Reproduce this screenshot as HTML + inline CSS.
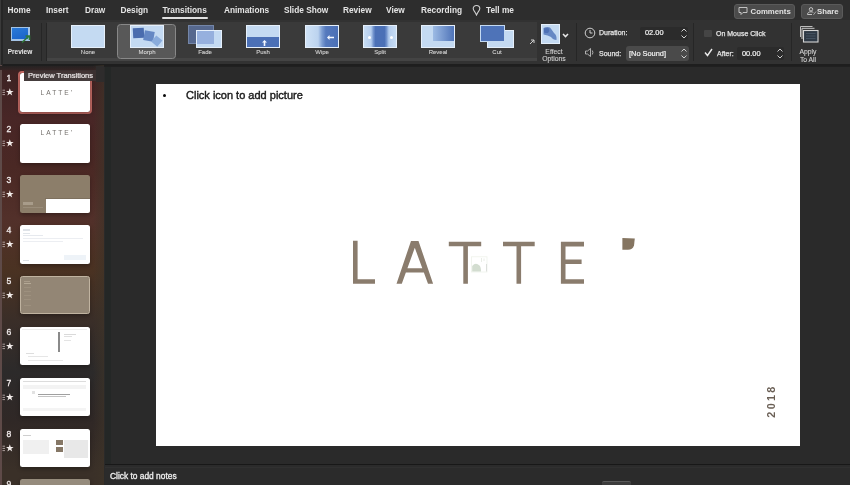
<!DOCTYPE html>
<html><head><meta charset="utf-8">
<style>
*{margin:0;padding:0;box-sizing:border-box}
html,body{width:850px;height:485px;overflow:hidden;background:#282828;font-family:"Liberation Sans",sans-serif}
.a{position:absolute}
#top{left:0;top:0;width:850px;height:20px;background:#2d2d2d}
#ribbon{left:0;top:20px;width:850px;height:46px;background:#323232;border-bottom:2px solid #1e1e1e}
.tab{position:absolute;top:5.2px;font-size:8.3px;color:#e4e4e4;font-weight:bold;white-space:nowrap;line-height:11px}
.lbl{position:absolute;font-size:6px;color:#d4d4d4;font-weight:normal;-webkit-text-stroke:0.1px #d4d4d4;white-space:nowrap;line-height:7px;text-align:center}
.th{position:absolute;top:25px;width:34px;height:23px;background:#c4daf2;border:1px solid #e6f0fb;overflow:hidden}
.blu{position:absolute;background:#4b70b6}
.sep{position:absolute;top:23px;width:1px;height:38px;background:#262626}
.rt{position:absolute;font-size:7px;color:#e4e4e4;font-weight:normal;-webkit-text-stroke:0.25px #e4e4e4;white-space:nowrap;line-height:8px}
.num{position:absolute;left:6px;width:6px;font-size:8.6px;font-weight:normal;-webkit-text-stroke:0.3px #f0eaea;color:#f0eaea;line-height:8px;text-align:center}
.sl{position:absolute;left:20px;width:69.6px;height:38.6px;background:#fff;border-radius:2.5px;overflow:hidden;box-shadow:0 2px 4px rgba(0,0,0,0.3)}
.mini{position:absolute;left:1.5px;top:16px;width:100%;text-align:center;font-size:6.6px;letter-spacing:2.05px;color:#74706c;line-height:7px;text-indent:2px}
#side{left:0;top:65.5px;width:104px;height:420px;background:linear-gradient(180deg,#2a2424 0px,#3c2222 5px,#482626 52px,#4a2824 102px,#52302a 152px,#4a3222 204px,#3a2e28 254px,#2c2a2a 306px,#302826 356px,#3a3028 404px)}
#main{left:104px;top:66px;width:746px;height:420px;background:#2a2a2a;border-top:1.5px solid #202020}
#slide{left:155.5px;top:83.7px;width:644.6px;height:362.8px;background:#fff}
#notes{left:104.5px;top:463.6px;width:746px;height:22px;background:#2b2b2b;border-top:1.2px solid #181818}
</style></head><body><div id="root" style="position:absolute;left:0;top:0;width:850px;height:485px;will-change:transform">
<div id="top" class="a"></div>
<div class="tab" style="left:7.5px">Home</div>
<div class="tab" style="left:46px">Insert</div>
<div class="tab" style="left:85px">Draw</div>
<div class="tab" style="left:120.5px">Design</div>
<div class="tab" style="left:162.5px">Transitions</div>
<div class="a" style="left:162px;top:17px;width:46px;height:2px;background:#e0e0e0;border-radius:1px"></div>
<div class="tab" style="left:224px">Animations</div>
<div class="tab" style="left:284px">Slide Show</div>
<div class="tab" style="left:343px">Review</div>
<div class="tab" style="left:386px">View</div>
<div class="tab" style="left:421px">Recording</div>
<svg class="a" style="left:471.5px;top:3.5px" width="9" height="12" viewBox="0 0 9 12"><path d="M4.5 1.5 C2.6 1.5 1.2 2.9 1.2 4.6 C1.2 6.4 2.8 7.6 3.6 9.2 L4.5 11 L5.4 9.2 C6.2 7.6 7.8 6.4 7.8 4.6 C7.8 2.9 6.4 1.5 4.5 1.5 Z" fill="none" stroke="#d0d0d0" stroke-width="1.1"/></svg>
<div class="tab" style="left:486px">Tell me</div>
<!-- top right buttons -->
<div class="a" style="left:734px;top:3.5px;width:61px;height:15px;background:#4b4b4b;border-radius:3px;border:1px solid #5a5a5a"></div>
<svg class="a" style="left:738px;top:6px" width="10" height="10" viewBox="0 0 10 10"><path d="M1 1.5 H9 V6.5 H5 L3 8.5 V6.5 H1 Z" fill="none" stroke="#d0d0d0" stroke-width="0.9"/></svg>
<div class="a" style="left:750.5px;top:6.6px;font-size:7.8px;font-weight:bold;color:#e2e2e2;line-height:9px">Comments</div>
<div class="a" style="left:801px;top:3.5px;width:42px;height:15px;background:#4b4b4b;border-radius:3px;border:1px solid #5a5a5a"></div>
<svg class="a" style="left:806px;top:6px" width="11" height="10" viewBox="0 0 11 10"><circle cx="5" cy="3.3" r="1.7" fill="none" stroke="#d0d0d0" stroke-width="0.9"/><path d="M1.5 8.5 C1.5 6.5 3 5.8 5 5.8 C6 5.8 6.8 6 7.3 6.4 M1.5 8.5 H6" fill="none" stroke="#d0d0d0" stroke-width="0.9"/><path d="M7.5 8.8 L10 5.5" stroke="#bbb" stroke-width="0.8"/></svg>
<div class="a" style="left:817px;top:6.6px;font-size:7.8px;font-weight:bold;color:#e2e2e2;line-height:9px">Share</div>

<div id="ribbon" class="a"></div>
<div class="a" style="left:0;top:0;width:1px;height:66px;background:#3a3a3a"></div><div class="a" style="left:1px;top:0;width:2px;height:66px;background:#262626"></div>
<!-- Preview -->
<div class="a" style="left:10.5px;top:26.5px;width:19px;height:14.3px;background:#a4c4e6;"></div>
<div class="a" style="left:12px;top:28px;width:16px;height:11.3px;background:linear-gradient(160deg,#2a7ad8,#1a62c8)"></div>
<svg class="a" style="left:21px;top:34px" width="11" height="10" viewBox="0 0 11 10"><path d="M1 8.5 L8 2 M4.5 2 H8.5 V6" fill="none" stroke="#2f7a3a" stroke-width="1.6"/></svg>
<div class="lbl" style="left:6px;top:47.8px;width:28px;font-size:6.5px;font-weight:bold;color:#ececec;-webkit-text-stroke:0">Preview</div>
<div class="sep" style="left:41px"></div>
<div class="sep" style="left:46px"></div>
<!-- gallery -->
<div class="a" style="left:47px;top:22px;width:490px;height:35.8px;background:#3a3a3a"></div>
<div class="a" style="left:47px;top:57.8px;width:490px;height:2.8px;background:#444"></div>
<div class="a" style="left:117px;top:23.8px;width:59px;height:35px;background:#585858;border:1.6px solid #888;border-radius:3.5px"></div>
<div class="th" style="left:71px"></div>
<div class="lbl" style="left:71px;top:49px;width:34px">None</div>
<div class="th" style="left:130px"><div class="blu" style="left:1.5px;top:1.5px;width:11px;height:10px;background:#4a6cae;transform:rotate(-3deg)"></div><div class="blu" style="left:13px;top:4.5px;width:10px;height:9.5px;background:#6588c4;transform:rotate(10deg)"></div><div class="blu" style="left:22px;top:10.5px;width:7.5px;height:7.5px;background:#8aacdc;transform:rotate(40deg)"></div></div>
<div class="lbl" style="left:130px;top:49px;width:34px">Morph</div>
<div class="th" style="left:188px;background:#3a3a3a;border:none"><div class="blu" style="left:0;top:-0.5px;width:26px;height:19.5px;background:#56688e;border:1px solid #7486a8"></div><div class="a" style="left:7.5px;top:5.2px;width:26px;height:17.8px;background:#c4daf2;border:1px solid #e6f0fb"></div><div class="blu" style="left:8.5px;top:6.2px;width:17px;height:12.8px;background:#96b0de"></div></div>
<div class="lbl" style="left:188px;top:49px;width:34px">Fade</div>
<div class="th" style="left:246px"><div class="blu" style="left:0;top:11px;width:34px;height:12px"></div><svg class="a" style="left:14.5px;top:13.5px" width="5" height="6" viewBox="0 0 5 6"><path d="M2.5 0 L5 2.5 H3.3 V6 H1.7 V2.5 H0 Z" fill="#f4f8ff"/></svg></div>
<div class="lbl" style="left:246px;top:49px;width:34px">Push</div>
<div class="th" style="left:305px;background:linear-gradient(90deg,#cfe2f6 0%,#bcd3ef 38%,#7c9dd2 50%,#5579bd 62%,#4b70b6 100%)"><svg class="a" style="left:21px;top:8.5px" width="7" height="5" viewBox="0 0 7 5"><path d="M0 2.5 L2.5 0 V1.7 H7 V3.3 H2.5 V5 Z" fill="#f4f8ff"/></svg></div>
<div class="lbl" style="left:305px;top:49px;width:34px">Wipe</div>
<div class="th" style="left:363px;background:linear-gradient(90deg,#c8ddf4 0%,#b4cdee 22%,#6d8fca 30%,#4b70b6 36%,#4b70b6 64%,#6d8fca 70%,#b4cdee 78%,#c8ddf4 100%)"><div class="a" style="left:4px;top:10px;width:3px;height:3px;background:#fff;border-radius:50%"></div><div class="a" style="left:26px;top:10px;width:3px;height:3px;background:#fff;border-radius:50%"></div></div>
<div class="lbl" style="left:363px;top:49px;width:34px">Split</div>
<div class="th" style="left:421px"><div class="blu" style="left:11px;top:0;width:22px;height:15px;background:linear-gradient(90deg,#9dbbe4,#4b70b6)"></div></div>
<div class="lbl" style="left:421px;top:49px;width:34px">Reveal</div>
<div class="th" style="left:480px;background:#3a3a3a;border:none"><div class="a" style="left:7px;top:5px;width:27px;height:18px;background:#c4daf2;border:1px solid #e6f0fb"></div><div class="blu" style="left:0;top:0;width:25px;height:17px;border:1px solid #c4daf2;background:#4e73b8"></div></div>
<div class="lbl" style="left:480px;top:49px;width:34px">Cut</div>
<svg class="a" style="left:529px;top:39px" width="6" height="6" viewBox="0 0 6 6"><path d="M1 5 L5 1 M2 1 H5 V4" fill="none" stroke="#cfcfcf" stroke-width="1"/></svg>
<!-- effect options -->
<div class="a" style="left:541px;top:24px;width:19px;height:20px;background:#c4daf2;border:1px solid #e6f0fb"></div>
<svg class="a" style="left:542px;top:25px" width="17" height="18" viewBox="0 0 17 18"><defs><filter id="bl"><feGaussianBlur stdDeviation="0.7"/></filter></defs><g filter="url(#bl)"><path d="M1.5 3 Q5 1.5 8 2.5 Q10 5 12 8 Q15 10 14.5 15 Q11 15 9 12 Q6 10 1.5 9.5 Z" fill="#6688c4"/><path d="M2 3.5 Q5 2.5 7 3.5 Q8 6 6 8 Q3 8 2 7.5 Z" fill="#4d6fb4"/></g></svg>
<svg class="a" style="left:562px;top:32.5px" width="7" height="5" viewBox="0 0 7 5"><path d="M1 1 L3.5 3.6 L6 1" fill="none" stroke="#e8e8e8" stroke-width="1.5"/></svg>
<div class="lbl" style="left:538px;top:47.5px;width:32px;font-size:6.8px;line-height:7.2px">Effect<br>Options</div>
<div class="sep" style="left:576px"></div>
<!-- duration -->
<svg class="a" style="left:584px;top:27px" width="12" height="12" viewBox="0 0 12 12"><circle cx="6" cy="6" r="4.8" fill="none" stroke="#cfcfcf" stroke-width="1"/><path d="M6 3 V6 H8.5" fill="none" stroke="#cfcfcf" stroke-width="1"/></svg>
<div class="rt" style="left:599px;top:29px">Duration:</div>
<div class="a" style="left:640px;top:27px;width:48px;height:13px;background:#2b2b2b;border-radius:2px"></div>
<div class="rt" style="left:645px;top:29px;font-weight:normal;font-size:7.4px;color:#f2f2f2;-webkit-text-stroke:0.2px #f2f2f2">02.00</div>
<svg class="a" style="left:680px;top:27px" width="8" height="13" viewBox="0 0 8 13"><path d="M1.5 4.5 L4 2 L6.5 4.5 M1.5 8.5 L4 11 L6.5 8.5" fill="none" stroke="#cfcfcf" stroke-width="1"/></svg>
<svg class="a" style="left:584px;top:47px" width="12" height="11" viewBox="0 0 12 11"><path d="M1.5 4 H3.5 L6.5 1.5 V9.5 L3.5 7 H1.5 Z" fill="none" stroke="#bdbdbd" stroke-width="0.9"/><path d="M8.3 3.5 Q9.5 5.5 8.3 7.5" fill="none" stroke="#bdbdbd" stroke-width="0.9"/></svg>
<div class="rt" style="left:599px;top:49.7px">Sound:</div>
<div class="a" style="left:626px;top:46px;width:63px;height:15px;background:#4a4a4a;border-radius:3px"></div>
<div class="rt" style="left:629px;top:49.7px;font-weight:normal;font-size:7.4px;color:#f2f2f2;-webkit-text-stroke:0.2px #f2f2f2">[No Sound]</div>
<svg class="a" style="left:680px;top:47px" width="8" height="13" viewBox="0 0 8 13"><path d="M1.5 4.5 L4 2 L6.5 4.5 M1.5 8.5 L4 11 L6.5 8.5" fill="none" stroke="#cfcfcf" stroke-width="1"/></svg>
<div class="sep" style="left:693px"></div>
<!-- on mouse click -->
<div class="a" style="left:704px;top:30px;width:8px;height:7px;background:#454545;border-radius:1px"></div>
<div class="rt" style="left:716px;top:30px">On Mouse Click</div>
<svg class="a" style="left:704px;top:48px" width="9" height="9" viewBox="0 0 9 9"><path d="M1 4.5 L3.5 7.5 L8 1" fill="none" stroke="#eaeaea" stroke-width="1.4"/></svg>
<div class="rt" style="left:717px;top:49.7px">After:</div>
<div class="a" style="left:737px;top:47px;width:47px;height:13px;background:#2b2b2b;border-radius:2px"></div>
<div class="rt" style="left:742px;top:49.7px;font-weight:normal;font-size:7.4px;color:#f2f2f2;-webkit-text-stroke:0.2px #f2f2f2">00.00</div>
<svg class="a" style="left:776px;top:47px" width="8" height="13" viewBox="0 0 8 13"><path d="M1.5 4.5 L4 2 L6.5 4.5 M1.5 8.5 L4 11 L6.5 8.5" fill="none" stroke="#cfcfcf" stroke-width="1"/></svg>
<div class="sep" style="left:791px"></div>
<!-- apply to all -->
<svg class="a" style="left:798px;top:24px" width="24" height="20" viewBox="0 0 24 20"><path d="M2.5 13 V2.5 H14.5" fill="none" stroke="#bdbdbd" stroke-width="1"/><path d="M4 15 V4.3 H16.5" fill="none" stroke="#c8c8c8" stroke-width="1"/><rect x="5.5" y="6.5" width="14.5" height="11.5" fill="#2f3a46" stroke="#d6d6d6" stroke-width="1.1"/><path d="M8 9.5 H17.5 M8 12 H17.5 M8 14.5 H17.5" stroke="#4a5868" stroke-width="0.8"/></svg>
<div class="lbl" style="left:794px;top:47.5px;width:28px;font-size:6.8px;line-height:8px">Apply<br>To All</div>

<div id="side" class="a"></div>
<div class="a" style="left:0;top:65px;width:1.5px;height:420px;background:#5e4a48"></div>
<div class="a" style="left:0;top:65.5px;width:104px;height:4px;background:linear-gradient(180deg,#262222,#342424)"></div>
<div class="a" style="left:93px;top:65px;width:11px;height:420px;background:linear-gradient(90deg,rgba(62,52,40,0) 0%,rgba(62,52,40,0.65) 100%)"></div>
<div class="a" style="left:104px;top:65px;width:1px;height:420px;background:#1e1e1e"></div>
<div class="num" style="top:74.2px">1</div>
<svg class="a" style="left:2px;top:88px" width="12" height="8" viewBox="0 0 12 8"><path d="M7.8 0.3 L8.8 3 L11.6 3 L9.3 4.7 L10.2 7.5 L7.8 5.8 L5.4 7.5 L6.3 4.7 L4 3 L6.8 3 Z" fill="#f2ecea"/><path d="M0.5 2.2 H3 M0.5 4.4 H3 M0.5 6.6 H3" stroke="#b8aaa8" stroke-width="0.9"/></svg>
<div class="num" style="top:125.2px">2</div>
<svg class="a" style="left:2px;top:139px" width="12" height="8" viewBox="0 0 12 8"><path d="M7.8 0.3 L8.8 3 L11.6 3 L9.3 4.7 L10.2 7.5 L7.8 5.8 L5.4 7.5 L6.3 4.7 L4 3 L6.8 3 Z" fill="#f2ecea"/><path d="M0.5 2.2 H3 M0.5 4.4 H3 M0.5 6.6 H3" stroke="#b8aaa8" stroke-width="0.9"/></svg>
<div class="num" style="top:175.8px">3</div>
<svg class="a" style="left:2px;top:189.6px" width="12" height="8" viewBox="0 0 12 8"><path d="M7.8 0.3 L8.8 3 L11.6 3 L9.3 4.7 L10.2 7.5 L7.8 5.8 L5.4 7.5 L6.3 4.7 L4 3 L6.8 3 Z" fill="#f2ecea"/><path d="M0.5 2.2 H3 M0.5 4.4 H3 M0.5 6.6 H3" stroke="#b8aaa8" stroke-width="0.9"/></svg>
<div class="num" style="top:226.4px">4</div>
<svg class="a" style="left:2px;top:240.2px" width="12" height="8" viewBox="0 0 12 8"><path d="M7.8 0.3 L8.8 3 L11.6 3 L9.3 4.7 L10.2 7.5 L7.8 5.8 L5.4 7.5 L6.3 4.7 L4 3 L6.8 3 Z" fill="#f2ecea"/><path d="M0.5 2.2 H3 M0.5 4.4 H3 M0.5 6.6 H3" stroke="#b8aaa8" stroke-width="0.9"/></svg>
<div class="num" style="top:277px">5</div>
<svg class="a" style="left:2px;top:290.8px" width="12" height="8" viewBox="0 0 12 8"><path d="M7.8 0.3 L8.8 3 L11.6 3 L9.3 4.7 L10.2 7.5 L7.8 5.8 L5.4 7.5 L6.3 4.7 L4 3 L6.8 3 Z" fill="#f2ecea"/><path d="M0.5 2.2 H3 M0.5 4.4 H3 M0.5 6.6 H3" stroke="#b8aaa8" stroke-width="0.9"/></svg>
<div class="num" style="top:328px">6</div>
<svg class="a" style="left:2px;top:341.8px" width="12" height="8" viewBox="0 0 12 8"><path d="M7.8 0.3 L8.8 3 L11.6 3 L9.3 4.7 L10.2 7.5 L7.8 5.8 L5.4 7.5 L6.3 4.7 L4 3 L6.8 3 Z" fill="#f2ecea"/><path d="M0.5 2.2 H3 M0.5 4.4 H3 M0.5 6.6 H3" stroke="#b8aaa8" stroke-width="0.9"/></svg>
<div class="num" style="top:379px">7</div>
<svg class="a" style="left:2px;top:392.8px" width="12" height="8" viewBox="0 0 12 8"><path d="M7.8 0.3 L8.8 3 L11.6 3 L9.3 4.7 L10.2 7.5 L7.8 5.8 L5.4 7.5 L6.3 4.7 L4 3 L6.8 3 Z" fill="#f2ecea"/><path d="M0.5 2.2 H3 M0.5 4.4 H3 M0.5 6.6 H3" stroke="#b8aaa8" stroke-width="0.9"/></svg>
<div class="num" style="top:429.9px">8</div>
<svg class="a" style="left:2px;top:443.7px" width="12" height="8" viewBox="0 0 12 8"><path d="M7.8 0.3 L8.8 3 L11.6 3 L9.3 4.7 L10.2 7.5 L7.8 5.8 L5.4 7.5 L6.3 4.7 L4 3 L6.8 3 Z" fill="#f2ecea"/><path d="M0.5 2.2 H3 M0.5 4.4 H3 M0.5 6.6 H3" stroke="#b8aaa8" stroke-width="0.9"/></svg>
<div class="num" style="top:480.4px">9</div>
<div class="a" style="left:18px;top:71px;width:74px;height:43px;border:2px solid #c06862;border-radius:4px"></div>
<div class="sl" style="top:73px"><div class="mini">LATTE'</div></div>
<div class="a" style="left:24px;top:69.5px;width:72px;height:11.5px;background:rgba(58,50,50,0.95)"></div><div class="a" style="left:96px;top:65.5px;width:8px;height:16px;background:#2e2c2c"></div>
<div class="a" style="left:28px;top:70.8px;font-size:7.5px;font-weight:normal;-webkit-text-stroke:0.2px #ece8e8;color:#ece8e8;line-height:9px;white-space:nowrap">Preview Transitions</div>
<div class="sl" style="top:124px"><div class="mini" style="top:5px">LATTE'</div></div>
<div class="sl" style="top:174.6px;background:#8c7e6a"><div class="a" style="left:25px;top:23px;width:45px;height:1.5px;background:#7d705e"></div><div class="a" style="left:26px;top:24.3px;width:44px;height:15px;background:#fff"></div><div class="a" style="left:2.5px;top:27.5px;width:10px;height:3px;background:#a89c8a"></div><div class="a" style="left:2.5px;top:32px;width:20px;height:1px;background:#9a8d7a"></div></div>
<div class="sl" style="top:225.2px"><div class="a" style="left:3px;top:4px;width:7px;height:1.5px;background:#dfe3e8"></div><div class="a" style="left:3px;top:7.5px;width:7px;height:1px;background:#e2e6ea"></div><div class="a" style="left:3px;top:10px;width:20px;height:1px;background:#e6e9ee"></div><div class="a" style="left:3px;top:13px;width:60px;height:1px;background:#eceef2"></div><div class="a" style="left:3px;top:16px;width:40px;height:1px;background:#eceef2"></div><div class="a" style="left:3px;top:35px;width:6px;height:1px;background:#dde0e4"></div><div class="a" style="left:44px;top:30px;width:22px;height:5px;background:#eef3f8"></div></div>
<div class="sl" style="top:275.8px;background:#938675;border:1px solid #c0b3a0"><div class="a" style="left:3px;top:4px;width:6px;height:1px;background:#a99c8a"></div><div class="a" style="left:3px;top:6.5px;width:7px;height:1.2px;background:#b5a996"></div><div class="a" style="left:3px;top:10px;width:7px;height:1px;background:#9d907e"></div><div class="a" style="left:3px;top:14px;width:7px;height:1px;background:#9d907e"></div><div class="a" style="left:3px;top:18px;width:7px;height:1px;background:#9d907e"></div><div class="a" style="left:3px;top:22px;width:7px;height:1px;background:#9d907e"></div><div class="a" style="left:3px;top:28px;width:7px;height:1px;background:#9d907e"></div></div>
<div class="sl" style="top:326.8px"><div class="a" style="left:38px;top:5.5px;width:1.6px;height:20px;background:#8a8a8a"></div><div class="a" style="left:2px;top:2.5px;width:65px;height:0.8px;background:#ececec"></div><div class="a" style="left:44px;top:7px;width:12px;height:1px;background:#dadada"></div><div class="a" style="left:44px;top:9.5px;width:8px;height:1px;background:#e0e0e0"></div><div class="a" style="left:44px;top:13px;width:7px;height:1px;background:#e4e4e4"></div><div class="a" style="left:6px;top:26px;width:8px;height:1px;background:#dedede"></div><div class="a" style="left:8px;top:29px;width:20px;height:1px;background:#e6e6e6"></div><div class="a" style="left:8px;top:33px;width:35px;height:1px;background:#e8e8e8"></div></div>
<div class="sl" style="top:377.8px"><div class="a" style="left:3px;top:3px;width:63px;height:0.8px;background:#dcdcdc"></div><div class="a" style="left:3px;top:7px;width:63px;height:4px;background:#f3f3f3"></div><div class="a" style="left:12px;top:13px;width:3px;height:3px;background:#e2e2e2"></div><div class="a" style="left:18px;top:16px;width:32px;height:0.8px;background:#a0a0a0"></div><div class="a" style="left:18px;top:18.5px;width:28px;height:0.8px;background:#c4c4c4"></div><div class="a" style="left:3px;top:30px;width:63px;height:3px;background:#f4f4f4"></div></div>
<div class="sl" style="top:428.7px"><div class="a" style="left:3px;top:6px;width:8px;height:1px;background:#cfcfcf"></div><div class="a" style="left:3px;top:11px;width:26px;height:14px;background:#f0f0f0"></div><div class="a" style="left:36px;top:11px;width:7px;height:5px;background:#857766"></div><div class="a" style="left:36px;top:18.5px;width:7px;height:5px;background:#857766"></div><div class="a" style="left:44px;top:11px;width:24px;height:18px;background:#e8e8e8"></div></div>
<div class="sl" style="top:479.2px;background:#958b7c"></div>

<div id="main" class="a"></div>
<div class="a" style="left:104.5px;top:67px;width:6px;height:397px;background:#242726"></div>
<div id="slide" class="a"></div>
<div class="a" style="left:163px;top:93.6px;width:3px;height:3px;background:#0a0a0a;border-radius:50%"></div>
<div class="a" style="left:186px;top:89px;font-size:11px;color:#1a1a1a;-webkit-text-stroke:0.4px #1a1a1a;line-height:13px;white-space:nowrap">Click icon to add picture</div>
<svg class="a" style="left:0;top:0" width="850" height="485" viewBox="0 0 850 485">
<g stroke="#8a7c6d" stroke-width="4.6" fill="none" stroke-linecap="butt">
<path d="M355.3 240.7 V281.5 H375"/>
<path d="M448.8 244 H481.2 M465.6 244 V283.8"/>
<path d="M503 244 H534.7 M518.8 244 V283.8"/>
<path d="M584 244.1 H563.2 V281.5 H584 M563.2 261.8 H581.6"/>
</g>
<path d="M396.5 283.8 L411 241 L418.5 241 L433.1 283.8 L428 283.8 L414.8 247.8 L401.8 283.8 Z M406.3 268.2 H423.4 L424.8 272.5 H404.9 Z" fill="#8a7c6d"/>
<path d="M622.4 238 L634.8 238.4 L634 245.5 Q632.5 249.8 628 249.8 L622.4 249.8 Z" fill="#857561"/>
<rect x="471.5" y="256.8" width="15.5" height="15.2" fill="none" stroke="#eef2ea" stroke-width="0.8"/><path d="M472.2 271.5 V266 Q475.5 262 479.5 265.5 Q481 267 481 271.5 Z" fill="#d3ddd0"/><path d="M486.5 264 V271.5" stroke="#d5d8d5" stroke-width="0.8"/><path d="M481.5 258 V262 M484 258.5 V261" stroke="#e3e8e0" stroke-width="0.8"/>
</svg>
<div class="a" style="left:750px;top:395.3px;width:42px;height:12px;transform:rotate(-90deg);font-size:10.8px;font-weight:bold;letter-spacing:2.35px;color:#6a5f55;line-height:12px;white-space:nowrap;text-align:center">2018</div>

<div id="notes" class="a"></div>
<div class="a" style="left:104.5px;top:466.5px;width:746px;height:1px;background:#303030"></div>
<div class="a" style="left:602px;top:480.5px;width:29px;height:6px;background:#3c3c3c;border-top:1px solid #5a5a5a;border-radius:2px 2px 0 0"></div>
<div class="a" style="left:110px;top:470.5px;font-size:8.4px;color:#f0f0f0;-webkit-text-stroke:0.3px #f0f0f0;line-height:10px;white-space:nowrap">Click to add notes</div>
</div></body></html>
